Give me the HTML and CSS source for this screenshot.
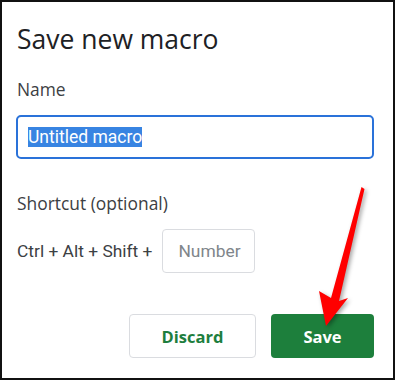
FILE: index.html
```html
<!DOCTYPE html>
<html>
<head>
<meta charset="utf-8">
<link rel="stylesheet" href="styles.css">
</head>
<body>
<div class="dialog">
  <h1 class="title">Save new macro</h1>
  <div class="label name-label">Name</div>
  <div class="name-input"><span class="sel">Untitled macro</span></div>
  <div class="label shortcut-label">Shortcut (optional)</div>
  <div class="shortcut-row">
    <span class="keys">Ctrl + Alt + Shift +</span>
    <div class="number-input">Number</div>
  </div>
  <div class="actions">
    <div class="btn discard">Discard</div>
    <div class="btn save">Save</div>
  </div>
  <svg class="arrow" width="395" height="380" viewBox="0 0 395 380">
    <polygon points="361.5,187 364.5,189 339,301 348,298 326,326 319,291 331,298" fill="#ff0000"/>
  </svg>
</div>
</body>
</html>
```

FILE: styles.css
```css
html, body {
  margin: 0;
  padding: 0;
  background: #fff;
}
.dialog {
  position: relative;
  width: 395px;
  height: 380px;
  box-sizing: border-box;
  border: 2px solid #111;
  padding: 0 19px 0 15px;
  font-family: Roboto, "Liberation Sans", sans-serif;
  color: #3c4043;
  overflow: hidden;
}
.title {
  margin: 20px 0 0 0;
  font-family: "Open Sans", Roboto, sans-serif;
  font-weight: 400;
  font-size: 26.5px;
  line-height: 34px;
  color: #202124;
}
.label {
  font-family: "Open Sans", Roboto, sans-serif;
  font-size: 17.4px;
  line-height: 20px;
  color: #3c4043;
}
.name-label {
  margin-top: 23px;
}
.name-input {
  margin: 16px 0 0 -1px;
  height: 44px;
  box-sizing: border-box;
  border: 2px solid #2a72d9;
  border-radius: 5px;
  padding: 0 10px;
  display: flex;
  align-items: center;
}
.sel {
  background: #3884e2;
  color: #fff;
  font-size: 17.5px;
  line-height: 20px;
  height: 20px;
}
.shortcut-label {
  margin-top: 34px;
}
.shortcut-row {
  margin-top: 16px;
  display: flex;
  align-items: center;
  gap: 10px;
}
.keys {
  font-size: 17.4px;
  color: #3c4043;
}
.number-input {
  width: 93px;
  height: 44px;
  box-sizing: border-box;
  border: 1px solid #dadce0;
  border-radius: 4px;
  padding-left: 15px;
  display: flex;
  align-items: center;
  font-size: 17.4px;
  color: #80868b;
}
.actions {
  margin-top: 41px;
  display: flex;
  justify-content: flex-end;
  gap: 15px;
}
.btn {
  height: 44px;
  box-sizing: border-box;
  border-radius: 4px;
  display: flex;
  align-items: center;
  justify-content: center;
  font-family: "Open Sans", Roboto, sans-serif;
  font-weight: 700;
  font-size: 16.5px;
}
.discard {
  width: 127px;
  border: 1px solid #dadce0;
  color: #1e7e3e;
  background: #fff;
}
.save {
  width: 103px;
  background: #1d7f3c;
  color: #fff;
}
.arrow {
  position: absolute;
  left: -2px;
  top: -2px;
  filter: drop-shadow(2px 2px 2px rgba(0,0,0,0.35));
}
```
